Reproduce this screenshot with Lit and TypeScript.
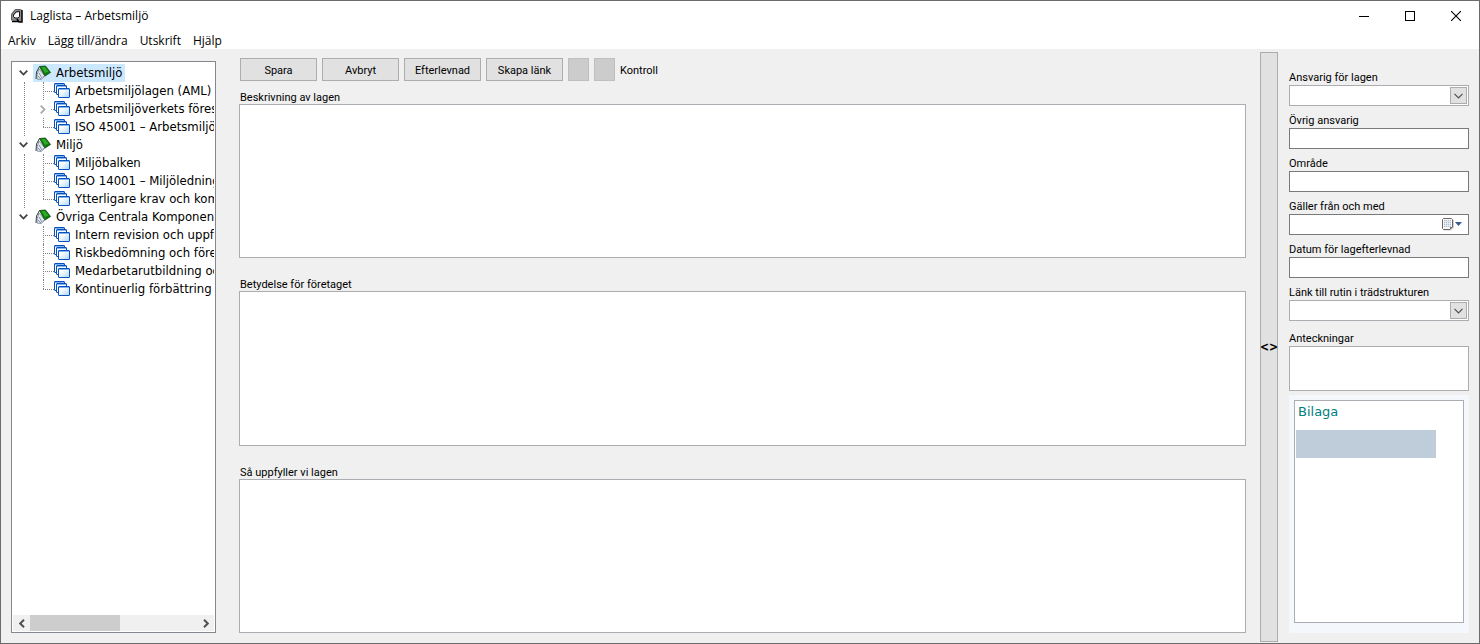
import { LitElement, html, css, svg, nothing } from "lit";
import { customElement, state } from "lit/decorators.js";

interface Leaf {
  label: string;
  collapsed?: boolean;
}
interface Group {
  label: string;
  children: Leaf[];
}

const GROUPS: Group[] = [
  {
    label: "Arbetsmiljö",
    children: [
      { label: "Arbetsmiljölagen (AML)" },
      { label: "Arbetsmiljöverkets föreskrifter", collapsed: true },
      { label: "ISO 45001 – Arbetsmiljöledning" },
    ],
  },
  {
    label: "Miljö",
    children: [
      { label: "Miljöbalken" },
      { label: "ISO 14001 – Miljöledningssystem" },
      { label: "Ytterligare krav och kommentarer" },
    ],
  },
  {
    label: "Övriga Centrala Komponenter",
    children: [
      { label: "Intern revision och uppföljning" },
      { label: "Riskbedömning och förebyggande" },
      { label: "Medarbetarutbildning och" },
      { label: "Kontinuerlig förbättring (PDCA)" },
    ],
  },
];

const appIcon = svg`<svg width="12" height="14" viewBox="0 0 12 14">
  <path d="M4 0h6l1 1v12H9l-2-2-1 1H1L0 11V5z" fill="#8c8c8c"/>
  <path d="M4.500 .5h5M4 1L.5 5.500V11" fill="none" stroke="#5a5a5a"/>
  <path d="M5 3h3v5L7 9H4L3 8V6z" fill="#fff"/>
  <path d="M8.500 2.500v5L7 9H4L2.500 7.500V6L5 3z" fill="none" stroke="#111"/>
  <path d="M11 1v12H8L6 10M1 12.500h6" fill="none" stroke="#000" stroke-width="1.500"/>
</svg>`;

const bookIcon = svg`<svg width="16" height="16" viewBox="0 0 16 16">
  <path d="M4 4L2 10v4l4 .5 4-3.500z" fill="#dfe6f0" stroke="#8a94a4"/>
  <path d="M4 8l3 5M3 11l3 3" stroke="#8a94a4"/>
  <path d="M4.500 1.500L1.500 7 1 14" fill="none" stroke="#3a4a3a"/>
  <path d="M4.500 1.500L10.500 1l5 6.500-5.500 3.500z" fill="#0d7d0d" stroke="#0a420a" stroke-width=".8"/>
  <path d="M6.500 2.300l3.500-.4 3.500 4.600-3.500 1.500z" fill="#2fa82a"/>
  <path d="M8 12l2-1" stroke="#8a94a4"/>
</svg>`;

const cardsIcon = svg`<svg width="16" height="16" viewBox="0 0 16 16">
  <defs><linearGradient id="g" x1="0" y1="0" x2="1" y2="1"><stop offset=".3" stop-color="#fff"/><stop offset="1" stop-color="#a8d6fa"/></linearGradient></defs>
  <rect x=".5" y=".5" width="10" height="9" rx=".5" fill="#fff" stroke="#0a4fc0"/>
  <rect x="2.500" y="2.500" width="10" height="9" rx=".5" fill="#fff" stroke="#0a4fc0"/>
  <rect x="4.500" y="5.500" width="11" height="9" rx=".5" fill="url(#g)" stroke="#0a4fc0"/>
  <path d="M1 1.500h9M3 3.500h9M5 6.500h10" stroke="#7db4ee"/>
</svg>`;

const chevDown = svg`<svg width="9" height="6" viewBox="0 0 9 6"><path d="M.7.7l3.800 3.800L8.300.7" fill="none" stroke="#404040" stroke-width="1.700"/></svg>`;
const chevRight = svg`<svg width="6" height="9" viewBox="0 0 6 9"><path d="M.7.7l3.800 3.800L.7 8.300" fill="none" stroke="#a6a6a6" stroke-width="1.700"/></svg>`;

@customElement("law-tree")
export class LawTree extends LitElement {
  @state() private selected = "Arbetsmiljö";

  static styles = css`
    :host { display: flex; flex-direction: column; background: #fff; border: 1px solid #828790; padding: 2px 1px 1px; overflow: hidden; box-sizing: border-box; }
    svg { display: block; flex: none; }
    .list { list-style: none; margin: 0; padding: 0; }
    .root { flex: 1; overflow: hidden; }
    .row { display: flex; align-items: center; height: 18px; white-space: nowrap; }
    .twist { display: flex; justify-content: center; width: 20px; flex: none; }
    .item { display: flex; align-items: center; gap: 5px; height: 18px; padding: 0 3px 0 2px; border: 0; background: none; font: 13px/18px "DejaVu Sans Condensed", "DejaVu Sans", sans-serif; color: #000; white-space: nowrap; }
    .item.on { background: #cce8ff; }
    .kids { margin-left: 11px; border-left: 1px dotted #808080; padding-left: 18px; }
    .group:last-child > .kids { border-left-color: transparent; }
    .leaf { display: flex; height: 18px; align-items: center; white-space: nowrap; }
    .branch { width: 11px; height: 18px; flex: none; position: relative; }
    .branch::before { content: ""; position: absolute; left: 0; top: 0; bottom: 0; border-left: 1px dotted #808080; }
    .leaf:last-child .branch::before { bottom: 9px; }
    .branch::after { content: ""; position: absolute; left: 0; right: 0; top: 9px; border-top: 1px dotted #808080; }
    .branch.closed::before { display: none; }
    .branch.closed::after { left: 8px; }
    .branch.closed { display: flex; align-items: center; }
    .branch.closed svg { margin-left: -3px; }
    .leaf .item { padding: 0; }
    .bar { display: flex; height: 16px; align-items: stretch; background: #f0f0f0; }
    .arrow { width: 17px; padding: 0; border: 0; background: none; display: flex; align-items: center; justify-content: center; }
    .track { flex: 1; display: flex; }
    .thumb { width: 54%; background: #cdcdcd; }
  `;

  private button(label: string, icon: unknown) {
    return html`<button class="item ${this.selected === label ? "on" : ""}" @click=${() => (this.selected = label)}>${icon}<span>${label}</span></button>`;
  }

  render() {
    return html`
      <ul class="list root">
        ${GROUPS.map((g) => html`<li class="group">
          <div class="row"><span class="twist">${chevDown}</span>${this.button(g.label, bookIcon)}</div>
          <ul class="list kids">
            ${g.children.map((c) => html`<li class="leaf">
              <span class="branch ${c.collapsed ? "closed" : ""}">${c.collapsed ? chevRight : nothing}</span>${this.button(c.label, cardsIcon)}
            </li>`)}
          </ul>
        </li>`)}
      </ul>
      <div class="bar">
        <button class="arrow" aria-label="Vänster"><svg width="6" height="9" viewBox="0 0 6 9"><path d="M5 .7L1.200 4.500 5 8.300" fill="none" stroke="#505050" stroke-width="2"/></svg></button>
        <div class="track"><div class="thumb"></div></div>
        <button class="arrow" aria-label="Höger"><svg width="6" height="9" viewBox="0 0 6 9"><path d="M1 .7l3.800 3.800L1 8.300" fill="none" stroke="#505050" stroke-width="2"/></svg></button>
      </div>`;
  }
}

@customElement("app-root")
export class AppRoot extends LitElement {
  static styles = css`
    :host { display: flex; flex-direction: column; box-sizing: border-box; min-height: 100vh; border: 1px solid #6b6b6b; background: #f0f0f0; color: #000; font: 11px/13px Roboto, sans-serif; }
    * { box-sizing: border-box; }
    svg { display: block; }
    button, input, select, textarea { font: inherit; color: inherit; margin: 0; border-radius: 0; }
    .title { display: flex; align-items: center; height: 30px; padding-left: 10px; background: #fff; font: 12px/16px "Open Sans", sans-serif; }
    .name { flex: 1; padding-left: 7px; }
    .win { width: 46px; height: 30px; border: 0; padding: 0; background: none; display: flex; align-items: center; justify-content: center; }
    .menu { display: flex; gap: 12px; height: 18px; padding: 1px 0 0 7px; background: #fff; font: 12px/17px "Open Sans", sans-serif; }
    .menu button { border: 0; padding: 0; background: none; }
    .body { flex: 1; display: grid; grid-template-columns: 205px 1fr 18px 191px; padding: 0 10px; }
    .tree { margin: 12px 0 10px; }
    .main { display: flex; flex-direction: column; padding: 9px 14px 10px 23px; }
    .tools { display: flex; gap: 5px; padding-left: 1px; height: 23px; align-items: center; margin-bottom: 9px; }
    .push { width: 77px; height: 23px; padding: 1px 0 0; border: 1px solid #adadad; background: #e1e1e1; }
    .sq { width: 21px; height: 23px; padding: 0; border: 1px solid #bfbfbf; background: #ccc; }
    .check { padding-top: 2px; }
    .areas { flex: 1; display: flex; flex-direction: column; gap: 19px; }
    .area { flex: 1; display: flex; flex-direction: column; }
    .area label { padding: 2px 0 0 1px; line-height: 12px; }
    .area textarea { flex: 1; }
    textarea { resize: none; border: 1px solid #abadb3; background: #fff; padding: 2px; outline: 0; display: block; width: 100%; }
    .split { margin: 3px 0 1px; padding: 0; border: 1px solid #adadad; background: #e1e1e1; font: bold 12px/14px "DejaVu Sans Condensed", "DejaVu Sans", sans-serif; display: flex; align-items: center; justify-content: center; }
    .side { display: flex; flex-direction: column; padding: 14px 0 10px 11px; }
    .field { display: flex; flex-direction: column; }
    .field label { line-height: 14px; padding-top: 8px; }
    .field.last { margin-top: 3px; }
    .box { height: 21px; width: 100%; border: 1px solid #7a7a7a; background: #fff; padding: 0 3px; outline: 0; display: block; }
    .drop { position: relative; }
    .drop select { appearance: none; border-color: #abadb3; }
    .knob { position: absolute; right: 2px; top: 2px; width: 17px; height: 17px; border: 1px solid #adadad; background: #e1e1e1; display: flex; align-items: center; justify-content: center; pointer-events: none; }
    .cal { position: absolute; right: 6px; top: 4px; pointer-events: none; }
    .note { height: 45px; }
    .panel { flex: 1; margin-top: 4px; padding: 5px 5px 10px; background: #f4f7fc; display: flex; }
    .inner { flex: 1; border: 1px solid #abadb3; background: #fff; padding: 1px; }
    .head { margin: 0; padding: 0 2px; font: 13px/20px "DejaVu Sans", sans-serif; color: #008080; }
    .strip { margin: 8px 26px 0 0; height: 28px; background: #bfccda; }
  `;

  private field(id: string, label: string, kind: "text" | "select" | "date") {
    const chev = svg`<svg width="9" height="6" viewBox="0 0 9 6"><path d="M.5.8l4 4 4-4" fill="none" stroke="#505050" stroke-width="1.200"/></svg>`;
    const cal = svg`<svg width="21" height="13" viewBox="0 0 21 13">
      <path d="M1.500 12h8l2-2V2" fill="none" stroke="#d0d0d0"/>
      <path d="M1.500.5h8l1 1V9l-2.500 2.500H1.500l-1-1v-9z" fill="#f6f7f9" stroke="#75635f"/>
      <path d="M2 2h7v7H2z" fill="#b4c0d0"/>
      <path d="M3.500 2v7M5.500 2v7M7.500 2v7M2 3.500h7M2 5.500h7M2 7.500h7" stroke="#eef2f7" stroke-width=".7"/>
      <path d="M8 11.500V9h2.500z" fill="#75635f"/>
      <path d="M13 4h7l-3.500 4z" fill="#3c5a8c"/></svg>`;
    return html`<div class="field">
      <label for=${id}>${label}</label>
      <div class="drop">
        ${kind === "select"
          ? html`<select class="box" id=${id}><option></option></select><span class="knob">${chev}</span>`
          : html`<input class="box" id=${id} type="text" />`}
        ${kind === "date" ? html`<span class="cal">${cal}</span>` : nothing}
      </div>
    </div>`;
  }

  private area(id: string, label: string) {
    return html`<div class="area"><label for=${id}>${label}</label><textarea id=${id}></textarea></div>`;
  }

  render() {
    return html`
      <header class="title">
        ${appIcon}<span class="name">Laglista – Arbetsmiljö</span>
        <button class="win" aria-label="Minimera"><svg width="10" height="10"><path d="M0 5.500h10" stroke="#000"/></svg></button>
        <button class="win" aria-label="Maximera"><svg width="10" height="10"><rect x=".5" y=".5" width="9" height="9" fill="none" stroke="#000"/></svg></button>
        <button class="win" aria-label="Stäng"><svg width="10" height="10"><path d="M0 0l10 10M10 0L0 10" stroke="#000" stroke-width="1.100"/></svg></button>
      </header>
      <nav class="menu">
        <button>Arkiv</button><button>Lägg till/ändra</button><button>Utskrift</button><button>Hjälp</button>
      </nav>
      <div class="body">
        <law-tree class="tree"></law-tree>
        <main class="main">
          <div class="tools">
            <button class="push">Spara</button><button class="push">Avbryt</button><button class="push">Efterlevnad</button><button class="push">Skapa länk</button>
            <button class="sq" aria-label="Färg 1"></button><button class="sq" aria-label="Färg 2"></button><span class="check">Kontroll</span>
          </div>
          <div class="areas">
            ${this.area("a1", "Beskrivning av lagen")}
            ${this.area("a2", "Betydelse för företaget")}
            ${this.area("a3", "Så uppfyller vi lagen")}
          </div>
        </main>
        <button class="split">&lt;&gt;</button>
        <aside class="side">
          ${this.field("f1", "Ansvarig för lagen", "select")}
          ${this.field("f2", "Övrig ansvarig", "text")}
          ${this.field("f3", "Område", "text")}
          ${this.field("f4", "Gäller från och med", "date")}
          ${this.field("f5", "Datum för lagefterlevnad", "text")}
          ${this.field("f6", "Länk till rutin i trädstrukturen", "select")}
          <div class="field last"><label for="f7">Anteckningar</label><textarea class="note" id="f7"></textarea></div>
          <section class="panel"><div class="inner"><h2 class="head">Bilaga</h2><div class="strip"></div></div></section>
        </aside>
      </div>`;
  }
}
